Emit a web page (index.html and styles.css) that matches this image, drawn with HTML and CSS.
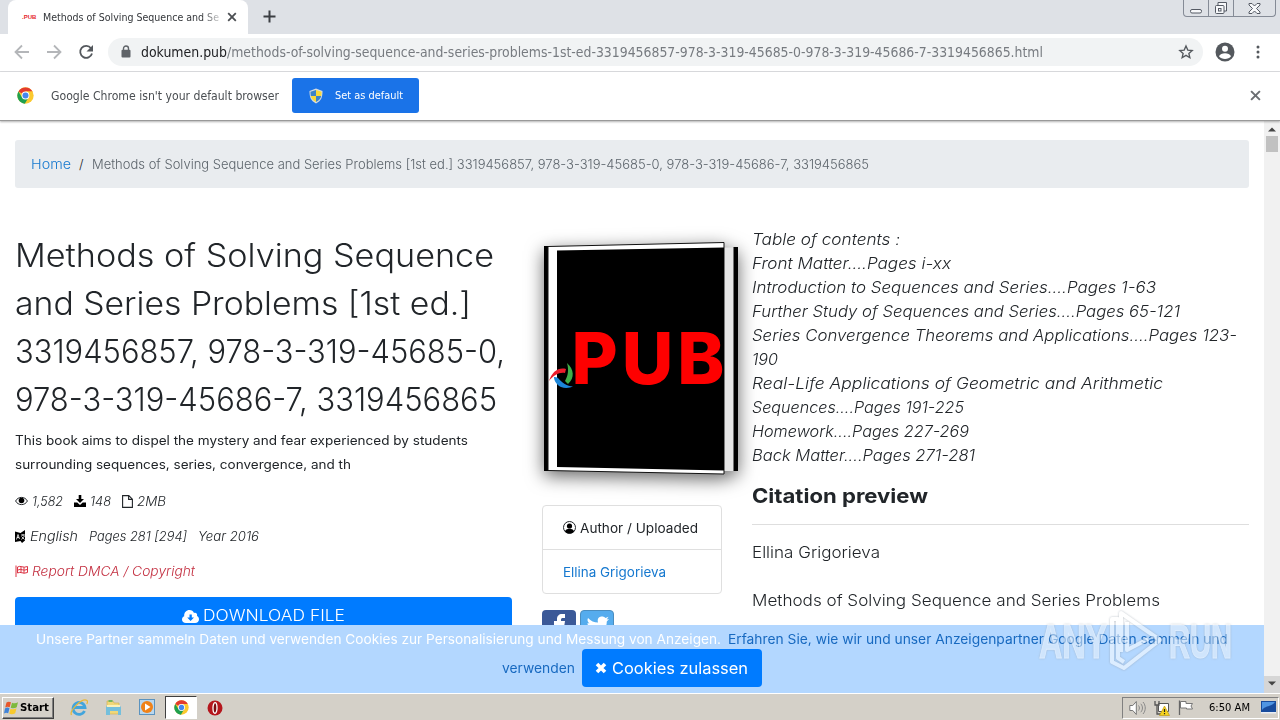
FILE: index.html
```html
<!DOCTYPE html>
<html lang="en">
  <head>
    <meta charset="UTF-8" />
    <title>Methods of Solving Sequence and Series Problems</title>
    <link rel="stylesheet" href="styles.css">
  </head>
  <body>
    <svg width="0" height="0" class="defs">
      <symbol id="chrome" viewBox="0 0 48 48">
        <circle cx="24" cy="24" r="23" fill="#fbc92f" />
        <path d="M24 24 4 12.500A23 23 0 0 1 44 13H24z" fill="#e33b2e" />
        <path d="M4 12.500A23 23 0 0 0 22 47L33 29 24 24 14 29z" fill="#1fa04f" />
        <path d="M24 13H44L34 24z" fill="#fbc92f" />
        <circle cx="24" cy="24" r="11" fill="#fff" />
        <circle cx="24" cy="24" r="8.500" fill="#4587ee" />
      </symbol>
    </svg>

    <div class="tabstrip">
      <div class="tab">
        <span class="favicon">.PUB</span>
        <span class="tab-title"><span data-width="176">Methods of Solving Sequence and Se</span></span>
        <svg class="tab-close" width="10" height="10" viewBox="0 0 10 10"><path d="M1.200 1.200 8.800 8.800M8.800 1.200 1.200 8.800" /></svg>
      </div>
      <svg class="new-tab" width="13" height="13" viewBox="0 0 13 13"><path d="M6.500 .5v12M.5 6.500h12" /></svg>
      <div class="window-buttons">
        <span><svg width="13" height="14" viewBox="0 0 13 14"><rect x=".5" y="8.500" width="11" height="3.500" rx="1.500" /></svg></span>
        <span><svg width="14" height="14" viewBox="0 0 14 14"><path d="M4 4V1.500h8.500v8.500H10" /><rect x="1.500" y="4.500" width="8.500" height="8" rx="1" /><rect x="4.500" y="7.500" width="2.500" height="2.500" /></svg></span>
        <span><svg width="13" height="14" viewBox="0 0 13 14"><path d="M1 2.500h3l2.500 2.500L9 2.500h3v1.500L8.500 7.500 12 11v1.500H9L6.500 10 4 12.500H1V11l3.500-3.500L1 4z" /></svg></span>
      </div>
    </div>

    <div class="toolbar">
      <svg class="nav" width="16" height="16" viewBox="0 0 16 16"><path d="M15 8H2M8 1.500 1.500 8 8 14.500" /></svg>
      <svg class="nav" width="16" height="16" viewBox="0 0 16 16"><path d="M1 8h13M8 1.500 14.500 8 8 14.500" /></svg>
      <svg class="nav reload" width="16" height="16" viewBox="0 0 16 16"><path d="M13 4.200A6 6 0 1 0 14 9.500" /><path class="solid" d="M15 1v6.500H8.500z" /></svg>
      <div class="omnibox">
        <svg width="10" height="13" viewBox="0 0 10 13"><path d="M2.500 5V3.500a2.500 2.500 0 0 1 5 0V5" fill="none" stroke="#5f6368" stroke-width="1.400" /><rect x=".5" y="4.800" width="9" height="7.700" rx="1" fill="#5f6368" /></svg>
        <span class="url"><b data-width="86">dokumen.pub</b><span data-width="816">/methods-of-solving-sequence-and-series-problems-1st-ed-3319456857-978-3-319-45685-0-978-3-319-45686-7-3319456865.html</span></span>
        <svg class="star" width="16" height="16" viewBox="0 0 24 24"><path d="m12 3 2.700 6.100 6.600.6-5 4.400 1.500 6.500-5.800-3.500-5.800 3.500 1.500-6.500-5-4.400 6.600-.6z" /></svg>
      </div>
      <svg class="avatar" width="20" height="20" viewBox="0 0 20 20"><circle cx="10" cy="10" r="9.500" fill="#54585d" /><circle cx="10" cy="6.800" r="3" fill="#fff" /><path d="M4 14.200c1.500-4 10.500-4 12 0-2.500 3.600-9.500 3.600-12 0z" fill="#fff" /></svg>
      <svg class="dots" width="4" height="14" viewBox="0 0 4 14"><circle cx="2" cy="2" r="1.500" /><circle cx="2" cy="7" r="1.500" /><circle cx="2" cy="12" r="1.500" /></svg>
    </div>

    <div class="infobar">
      <svg width="17" height="17"><use href="#chrome" /></svg>
      <span class="info-text"><span data-width="228">Google Chrome isn't your default browser</span></span>
      <div class="set-default">
        <svg width="14" height="16" viewBox="0 0 14 16"><path d="M7 .5 13.500 3c0 6-1 9.500-6.500 12.500C1.500 12.500.5 9 .5 3z" fill="#d6dce0" /><path d="M7 2v6H1.800C1.500 6.500 1.500 5 1.500 3.700z" fill="#3c83c8" /><path d="M7 2v6h5.200c.3-1.500.3-3 .3-4.300z" fill="#f8d93a" /><path d="M7 14V8H1.800C2.500 11 4 12.500 7 14z" fill="#f8d93a" /><path d="M7 14V8h5.200C11.500 11 10 12.500 7 14z" fill="#3c83c8" /></svg>
        <span data-width="68">Set as default</span>
      </div>
      <svg class="info-close" width="11" height="11" viewBox="0 0 10 10"><path d="M1 1 9 9M9 1 1 9" /></svg>
    </div>

    <div class="viewport">
      <div class="page">
        <div class="breadcrumb">
          <a data-width="40">Home</a>
          <span class="slash">/</span>
          <span class="muted" data-width="777">Methods of Solving Sequence and Series Problems [1st ed.] 3319456857, 978-3-319-45685-0, 978-3-319-45686-7, 3319456865</span>
        </div>

        <div class="columns">
          <div class="details">
            <h1>
              <span data-width="479">Methods of Solving Sequence</span><br>
              <span data-width="456">and Series Problems [1st ed.]</span><br>
              <span data-width="490">3319456857, 978-3-319-45685-0,</span><br>
              <span data-width="482">978-3-319-45686-7, 3319456865</span>
            </h1>
            <p class="summary">
              <span data-width="453">This book aims to dispel the mystery and fear experienced by students</span><br>
              <span data-width="336">surrounding sequences, series, convergence, and th</span>
            </p>
            <div class="meta">
              <svg width="13" height="10" viewBox="0 0 13 10"><path d="M.6 5C3 .2 10 .2 12.400 5 10 9.800 3 9.800.6 5z" fill="none" stroke="#212529" /><circle cx="6.500" cy="4.500" r="2.800" /></svg>
              <i data-width="31">1,582</i>
              <svg class="gap" width="12" height="12" viewBox="0 0 12 12"><path d="M4.700 0h2.600v4H10L6 8 2 4h2.700zM0 7.500h3.300L6 10l2.700-2.500H12V12H0z" /></svg>
              <i data-width="21">148</i>
              <svg class="gap" width="11" height="13" viewBox="0 0 11 13"><path d="M.6.6h6.200l3.600 3.600v8.200H.6zM6.600.6v3.800h3.800" fill="none" stroke="#212529" stroke-width="1.100" /></svg>
              <i data-width="29">2MB</i>
            </div>
            <div class="meta">
              <svg width="11" height="13" viewBox="0 0 11 13"><path d="M0 1.500 5.500 3 10 0v10.500L7 13 5.500 11 0 12z" /><path d="M1.500 9.500 3 4.500l1.500 4.500M2 7.500h2M6 5h4M8 4v2M6.500 9.500 9.500 6M6.500 6.500l3 3" stroke="#fff" stroke-width=".8" fill="none" /></svg>
              <i data-width="48">English</i>
              <i class="gap" data-width="98">Pages 281 [294]</i>
              <i class="gap" data-width="61">Year 2016</i>
            </div>
            <div class="meta danger">
              <svg width="13" height="12" viewBox="0 0 13 12"><path d="M1 .5V12M2.500 2c3-2 5.500 1.500 10-.5v6c-4.500 2-7-1.500-10 .5zM3 5c3-2 5.500 1.500 9-.5M6 1.500v6M9 2v6.500" fill="none" stroke="#dc3545" /></svg>
              <i data-width="163">Report DMCA / Copyright</i>
            </div>
            <div class="download">
              <svg width="17" height="13" viewBox="0 0 17 13"><path d="M4 13C1.500 13 0 11.500 0 9.500 0 8 .8 6.700 2.200 6.200 1.800 2.500 4.500 0 7.500 0c2.200 0 3.800 1.200 4.500 3 2-.8 3.700 1 3 3 1.200.5 2 1.700 2 3.200C17 11.500 15.500 13 13 13z" fill="#fff" /><path d="M7.500 4.500h2.300v3H12L8.600 11 5.200 7.500h2.300z" fill="#007bff" /></svg>
              <span data-width="142">DOWNLOAD FILE</span>
            </div>
          </div>

          <div class="book-col">
            <svg class="book" width="196" height="234" viewBox="543 241 196 234">
              <rect x="724" y="247.500" width="10" height="223.500" fill="#e6e6e6" />
              <rect x="544" y="246" width="4.500" height="225" />
              <rect x="733.500" y="247" width="4.500" height="224" />
              <path d="M548 246.500 724 242.500V474L548 470.500z" fill="#fff" stroke="#111" />
              <path d="M557 250.500 724 247.500V470.500L557 467z" />
              <text x="571.500" y="384" textLength="153" lengthAdjust="spacing">PUB</text>
              <path d="M549 381c3-9 9-14 17-12l-1 4c-6-1-11 2-16 8z" fill="#ec1c2c" />
              <path d="M567 363c7 6 8 15 1 21l-3-3c3-5 4-11 2-18z" fill="#3fae49" />
              <path d="M554 377c1 0 3 0 4 1 4 5 9 8 15 8.500-3 1.500-8 2-12 .5-4-2-7-6-7-10z" fill="#1c86d9" />
            </svg>
            <div class="card">
              <div class="card-row">
                <svg width="13" height="13" viewBox="0 0 13 13"><circle cx="6.500" cy="6.500" r="6" fill="none" stroke="#212529" /><circle cx="6.500" cy="5" r="2.600" /><path d="M1.800 10.300C3.500 7 9.500 7 11.200 10.300 9 13.300 4 13.300 1.800 10.300z" /></svg>
                <span data-width="118">Author / Uploaded</span>
              </div>
              <div class="card-row"><a data-width="103">Ellina Grigorieva</a></div>
            </div>
            <div class="social">
              <div class="facebook"><svg width="34" height="30" viewBox="0 0 34 30"><path d="M15 30V15h-3v-4h3V9c0-3 2-5 5-5h3v4h-2c-1.500 0-2 .5-2 2v1h4l-.6 4H19v15z" fill="#fff" /></svg></div>
              <div class="twitter"><svg width="34" height="30" viewBox="0 0 34 30"><path d="M7 7c3 3 6 4.500 10 4.500C16 7.500 18 5.500 21 5.500c1.500 0 2.500.5 3.500 1.500l3-1.200-1.800 2.700L28 8l-2.200 2.500C26 18 20 25 12 24c-2 0-4-.6-6-1.700 3 0 4.500-.8 6-2-2-.3-3.500-1.300-4-3.300h2C7.500 16 6.500 14 6.500 12l2 .6C6.500 11 6 9 7 7z" fill="#fff" /></svg></div>
            </div>
          </div>

          <div class="preview">
            <div class="toc">
              <i data-width="148">Table of contents :</i><br>
              <i data-width="199">Front Matter....Pages i-xx</i><br>
              <i data-width="404">Introduction to Sequences and Series....Pages 1-63</i><br>
              <i data-width="428">Further Study of Sequences and Series....Pages 65-121</i><br>
              <i data-width="485">Series Convergence Theorems and Applications....Pages 123-</i><br>
              <i data-width="26">190</i><br>
              <i data-width="411">Real-Life Applications of Geometric and Arithmetic</i><br>
              <i data-width="212">Sequences....Pages 191-225</i><br>
              <i data-width="217">Homework....Pages 227-269</i><br>
              <i data-width="223">Back Matter....Pages 271-281</i>
            </div>
            <h2><span data-width="176">Citation preview</span></h2>
            <p><span data-width="128">Ellina Grigorieva</span></p>
            <p><span data-width="408">Methods of Solving Sequence and Series Problems</span></p>
          </div>
        </div>

        <div class="cookie-bar">
          <div>
            <span data-width="685">Unsere Partner sammeln Daten und verwenden Cookies zur Personalisierung und Messung von Anzeigen.</span>
            <a data-width="500">Erfahren Sie, wie wir und unser Anzeigenpartner Google Daten sammeln und</a>
          </div>
          <div>
            <a data-width="73">verwenden</a>
            <span class="cookie-btn">
              <svg width="12" height="12" viewBox="0 0 12 12"><path d="M2 2 10 10M10 2 2 10" stroke="#fff" stroke-width="3.600" /></svg>
              <span data-width="136">Cookies zulassen</span>
            </span>
          </div>
        </div>
      </div>

      <div class="scrollbar">
        <svg width="8" height="5" viewBox="0 0 8 5"><path d="M0 4.500 4 .5 8 4.500z" /></svg>
        <div class="thumb"></div>
        <div class="down"><svg width="8" height="5" viewBox="0 0 8 5"><path d="M0 .5 4 4.500 8 .5z" /></svg></div>
      </div>
    </div>

    <div class="taskbar">
      <div class="start">
        <svg width="15" height="14" viewBox="0 0 15 14"><path d="M2.500 1.500C4 .3 5.500.5 7 1.300L5.700 6.300C4.300 5.500 2.700 5.500 1.200 6.500z" fill="#e8572a" /><path d="M8 1.800c2 .9 4 .7 6-.5l-1.300 5c-2 1.200-4 1.200-6 .4z" fill="#7db93c" /><path d="M1 7.400c1.500-1 3-1 4.500-.2l-1.300 5C2.700 11.400 1.300 11.500 0 12.400z" fill="#3f83d8" /><path d="M6.500 7.700c2 .8 4 .7 6-.5l-1.300 5c-2 1.100-4 1.200-6 .5z" fill="#f7c92d" /></svg>
        <b data-width="29">Start</b>
      </div>
      <div class="launch">
        <svg width="18" height="18" viewBox="0 0 18 18"><path d="M14.500 12A6 6 0 1 1 15 8.500H4" fill="none" stroke="#43a5dc" stroke-width="2.800" /><path d="M1.500 16C-1 12 12-1.500 17 1.500c.8.700.5 2-.2 3.500" fill="none" stroke="#e8b83a" stroke-width="1.300" /></svg>
      </div>
      <div class="launch">
        <svg width="17" height="17" viewBox="0 0 17 17"><path d="M2 2h6l1 2h5v11H2z" fill="#f0d778" stroke="#d0ac4b" stroke-width=".6" /><path d="M3.500 1h4v2h-4z" fill="#75b65d" /><path d="M1 7.500h15V16h-3v-4H5v4H1z" fill="#74bfdc" /><path d="M2 6h13v2H2z" fill="#fbf0b8" /></svg>
      </div>
      <div class="launch">
        <svg width="17" height="17" viewBox="0 0 17 17"><rect x=".5" y=".5" width="15" height="15" fill="#b9d7ee" stroke="#5b93bf" /><circle cx="8" cy="8" r="6" fill="#f08218" /><path d="m6 4.500 5.500 3.500L6 11.500z" fill="#fff" /></svg>
      </div>
      <div class="launch active">
        <svg width="15" height="15"><use href="#chrome" /></svg>
      </div>
      <div class="launch">
        <svg width="16" height="16" viewBox="0 0 16 16"><circle cx="8" cy="8" r="7.500" fill="#b5161d" /><ellipse cx="8" cy="8" rx="2" ry="5.300" fill="#7b0b10" stroke="#fff" stroke-width="1.300" /></svg>
      </div>
      <div class="tray">
        <svg width="17" height="14" viewBox="0 0 17 14"><path d="M.8 4.500h3l3.500-4v13l-3.500-4h-3z" fill="#fff" stroke="#777" /><path d="M9.500 4.500c1.200 1.500 1.200 3.500 0 5M11.800 2.800c2.200 2.600 2.200 5.800 0 8.400M14 1c3 3.500 3 8.500 0 12" fill="none" stroke="#888" /></svg>
        <svg width="16" height="16" viewBox="0 0 16 16"><path d="M4.500 3.500h10v8h-10z" fill="#fff" stroke="#555" /><path d="M1 1v4h4V1M3 5v9h5" fill="none" stroke="#555" stroke-width="1.300" /><path d="m10.500 6 5 9.500h-10z" fill="#f6d31f" stroke="#b99100" stroke-width=".6" /><path d="M10.500 9v3M10.500 13v1.300" stroke="#222" stroke-width="1.200" /></svg>
        <svg width="16" height="15" viewBox="0 0 16 15"><path d="M1.500.5V15" stroke="#666" stroke-width="1.300" /><path d="M2.500 1.500H8v2h6.500L13 6l1.500 3H8.500V8h-6z" fill="#fff" stroke="#777" /></svg>
        <span class="clock" data-width="41">6:50 AM</span>
        <svg class="show-desktop" width="15" height="13" viewBox="0 0 15 13"><rect width="15" height="11" fill="#174b9c" /><path d="M1 1h13C11 6 5 4 1 9z" fill="#4f95e2" /><path d="M0 11h15v1.500H0z" fill="#e8edf4" /></svg>
      </div>
    </div>

    <svg class="watermark" width="200" height="66" viewBox="1036 608 200 66">
      <text x="1039" y="658" textLength="68" lengthAdjust="spacingAndGlyphs">ANY</text>
      <text x="1169" y="658" textLength="63" lengthAdjust="spacingAndGlyphs">RUN</text>
      <path d="M1121 652V613L1160 640 1124 668 1112 662V619H1118V658L1124 662" />
      <path d="M1127 622V650L1148 639" />
    </svg>

    <script>
      // stretch each label to its set width
      document.querySelectorAll("[data-width]").forEach((el) => {
        const width = Number(el.dataset.width);
        const scale = width / el.getBoundingClientRect().width;
        el.style.width = width + "px";
        el.style.transform = `scaleX(${scale})`;
      });
    </script>
  </body>
</html>
```
FILE: styles.css
```css
* {
  box-sizing: border-box;
}

body {
  margin: 0;
  width: 1280px;
  height: 720px;
  overflow: hidden;
  display: flex;
  flex-direction: column;
  position: relative;
  background: #fff;
  font-family: "DejaVu Sans Condensed", "DejaVu Sans", sans-serif;
  font-size: 11px;
  color: #212529;
}

svg {
  display: block;
  flex: none;
}

.defs {
  position: absolute;
}

[data-width] {
  display: inline-block;
  flex: none;
  white-space: nowrap;
  transform-origin: left center;
}

/* browser chrome */
.tabstrip {
  height: 34px;
  flex: none;
  display: flex;
  background: #dee1e6;
  padding-left: 8px;
}

.tab {
  width: 240px;
  height: 34px;
  display: flex;
  align-items: center;
  padding: 0 11px 0 14px;
  background: #fff;
  border-radius: 8px 8px 0 0;
}

.favicon {
  width: 21px;
  font: bold 6px "Liberation Sans", sans-serif;
  color: #e5252c;
}

.tab-title {
  width: 178px;
  overflow: hidden;
  white-space: nowrap;
  color: #33363a;
  -webkit-mask-image: linear-gradient(to right, #000 158px, transparent 182px);
}

.tab-close,
.info-close {
  margin-left: auto;
  fill: none;
  stroke: #4b4e52;
  stroke-width: 1.8;
}

.info-close {
  stroke: #6b6e72;
}

.new-tab {
  margin: 10px 0 0 15px;
  fill: none;
  stroke: #3b3e43;
  stroke-width: 2;
}

.window-buttons {
  display: flex;
  height: 17px;
  margin: 0 4px 0 auto;
  border: 1px solid #858b96;
  border-top: none;
  border-radius: 0 0 4px 4px;
}

.window-buttons span {
  width: 25px;
  display: flex;
  justify-content: center;
  border-right: 1px solid #858b96;
}

.window-buttons span:last-child {
  width: 41px;
  border-right: none;
}

.window-buttons svg {
  margin-top: 1px;
  fill: #f7f8fa;
  stroke: #555a64;
}

.toolbar {
  height: 38px;
  flex: none;
  display: flex;
  align-items: center;
  padding: 0 20px 2px 14px;
  border-bottom: 1px solid #dcdde0;
}

.nav {
  margin-right: 16px;
  fill: none;
  stroke: #b4b6b9;
  stroke-width: 1.8;
}

.reload {
  margin-right: 14px;
  stroke: #54585d;
}

.reload .solid {
  fill: #54585d;
  stroke: none;
}

.omnibox {
  width: 1096px;
  height: 28px;
  display: flex;
  align-items: center;
  padding: 0 10px 0 13px;
  border-radius: 14px;
  background: #f1f3f4;
  font-size: 14px;
}

.url {
  margin-left: 10px;
  white-space: nowrap;
  color: #777b80;
}

.url b {
  font-weight: normal;
  color: #202124;
}

.star {
  margin: 0 -1px 0 auto;
  fill: none;
  stroke: #54585d;
  stroke-width: 2;
}

.avatar {
  margin-left: 12px;
}

.dots {
  margin-left: 21px;
  fill: #54585d;
}

.infobar {
  height: 49px;
  flex: none;
  display: flex;
  align-items: center;
  padding: 0 19px 1px 17px;
  border-bottom: 1px solid #999;
  box-shadow: 0 1px 2px rgba(0, 0, 0, 0.3);
  z-index: 1;
  font-size: 12px;
  color: #4a4e52;
}

.info-text {
  margin-left: 17px;
  width: 241px;
}

.set-default {
  width: 127px;
  height: 35px;
  display: flex;
  align-items: center;
  gap: 12px;
  padding-left: 17px;
  border-radius: 3px;
  background: #1a73e8;
  color: #fff;
  font-size: 11px;
}

/* document */
.viewport {
  height: 572px;
  flex: none;
  display: flex;
}

.page {
  width: 1264px;
  height: 572px;
  position: relative;
  overflow: hidden;
  padding: 19px 15px 0;
  font-family: Inter, "Open Sans", sans-serif;
  font-size: 15.5px;
  font-weight: 300;
  line-height: 24px;
}

a {
  color: #1578cf;
}

.breadcrumb {
  height: 48px;
  display: flex;
  align-items: center;
  padding: 0 16px;
  border-radius: 3px;
  background: #e9ecef;
  font-size: 13px;
}

.slash {
  margin: 0 8px;
  width: 5px;
}

.muted {
  color: #5c646b;
}

.columns {
  display: grid;
  grid-template-columns: 497px 180px 497px;
  gap: 30px;
  margin-top: 40px;
}

h1 {
  margin: 4px 0 0;
  font-size: 32px;
  font-weight: 300;
  line-height: 48px;
}

.summary {
  margin: 5px 0 0;
  font-size: 12.5px;
  font-weight: 400;
}

.meta {
  display: flex;
  align-items: center;
  gap: 5px;
  height: 24px;
  margin-top: 11px;
  font-size: 13px;
}

.summary + .meta {
  margin-top: 12px;
}

.meta svg + i {
  margin-left: -1px;
}

.meta .gap {
  margin-left: 6px;
}

.danger {
  color: #c32f40;
}

.download {
  display: flex;
  justify-content: center;
  align-items: center;
  gap: 4px;
  height: 38px;
  margin-top: 14px;
  border-radius: 4px;
  background: #007bff;
  color: #fff;
}

.book {
  display: block;
  overflow: visible;
  margin: 13px 0 0 1px;
  filter: drop-shadow(0 5px 9px rgba(0, 0, 0, 0.6));
}

.book text {
  font: 800 71px Inter, sans-serif;
  fill: #fe0000;
}

.card {
  margin-top: 30px;
  width: 180px;
  border: 1px solid #dfdfdf;
  border-radius: 4px;
  font-size: 13px;
  font-weight: 400;
}

.card-row {
  height: 43px;
  display: flex;
  align-items: center;
  gap: 4px;
  padding-left: 20px;
}

.card-row + .card-row {
  height: 44px;
  border-top: 1px solid #dfdfdf;
}

.social {
  display: flex;
  gap: 4px;
  margin-top: 16px;
}

.social div {
  width: 34px;
  height: 34px;
  border-radius: 4px;
}

.facebook {
  background: #3b5998;
}

.twitter {
  background: #55acee;
  border: 1px solid #4b8dbf;
}

.toc {
  white-space: nowrap;
}

h2 {
  margin: 13px 0 16px;
  height: 44px;
  border-bottom: 1px solid #dedede;
  font-size: 20px;
  font-weight: 700;
  line-height: 30px;
}

.preview p {
  margin: 0 0 24px;
}

.cookie-bar {
  position: absolute;
  left: 0;
  bottom: 0;
  width: 1264px;
  height: 68px;
  background: #b3d7ff;
  color: #fff;
  font-size: 13px;
  font-weight: 400;
}

.cookie-bar > div {
  display: flex;
  justify-content: center;
  gap: 7px;
  padding-top: 2px;
}

.cookie-bar > div + div {
  padding: 0;
  margin-top: -2px;
  align-items: center;
}

.cookie-bar a {
  color: #1769c0;
}

.cookie-btn {
  display: flex;
  align-items: center;
  gap: 5px;
  width: 180px;
  height: 38px;
  padding-left: 13px;
  border-radius: 4px;
  background: #007bff;
  font-size: 16px;
}

.scrollbar {
  width: 16px;
  display: flex;
  flex-direction: column;
  align-items: center;
  padding-top: 6px;
  background: #f1f1f1;
}

.scrollbar svg {
  fill: #444;
}

.thumb {
  width: 12px;
  height: 16px;
  margin-top: 4px;
  background: #c1c1c1;
}

.down {
  width: 16px;
  height: 17px;
  margin-top: auto;
  padding: 5px 4px;
  background: #d6d6d6;
}

/* taskbar */
.taskbar {
  height: 27px;
  flex: none;
  display: flex;
  align-items: center;
  padding: 1px 1px 0 2px;
  border-top: 1px solid #fff;
  background: #d4d0c8;
  color: #000;
}

.start {
  width: 52px;
  height: 22px;
  display: flex;
  align-items: center;
  gap: 1px;
  padding-left: 1px;
  margin-right: 8px;
  border: 1px solid;
  border-color: #fff #404040 #404040 #fff;
  box-shadow: inset -1px -1px #808080;
}

.launch {
  width: 34px;
  height: 23px;
  display: flex;
  align-items: center;
  justify-content: center;
}

.active {
  width: 32px;
  margin: 0 1px;
  background: #fff;
  border: 1px solid;
  border-color: #404040 #fff #fff #404040;
}

.tray {
  width: 157px;
  height: 22px;
  display: flex;
  align-items: center;
  margin-left: auto;
  padding: 0 2px 0 6px;
  border: 1px solid;
  border-color: #808080 #fff #fff #808080;
}

.tray svg {
  margin-right: 8px;
}

.clock {
  margin-left: 7px;
}

.tray .show-desktop {
  margin: 0 0 0 auto;
}

.watermark {
  position: absolute;
  left: 1036px;
  top: 608px;
  opacity: 0.55;
}

.watermark text {
  font: bold 48px "Liberation Sans", sans-serif;
  fill: #e9f1fa;
  stroke: #fff;
  stroke-width: 1;
  filter: drop-shadow(0 0 1px #9aa4b0);
}

.watermark path {
  fill: none;
  stroke: #fff;
  stroke-width: 4;
  stroke-linejoin: round;
  filter: drop-shadow(0 0 1px #8a94a0);
}
```
